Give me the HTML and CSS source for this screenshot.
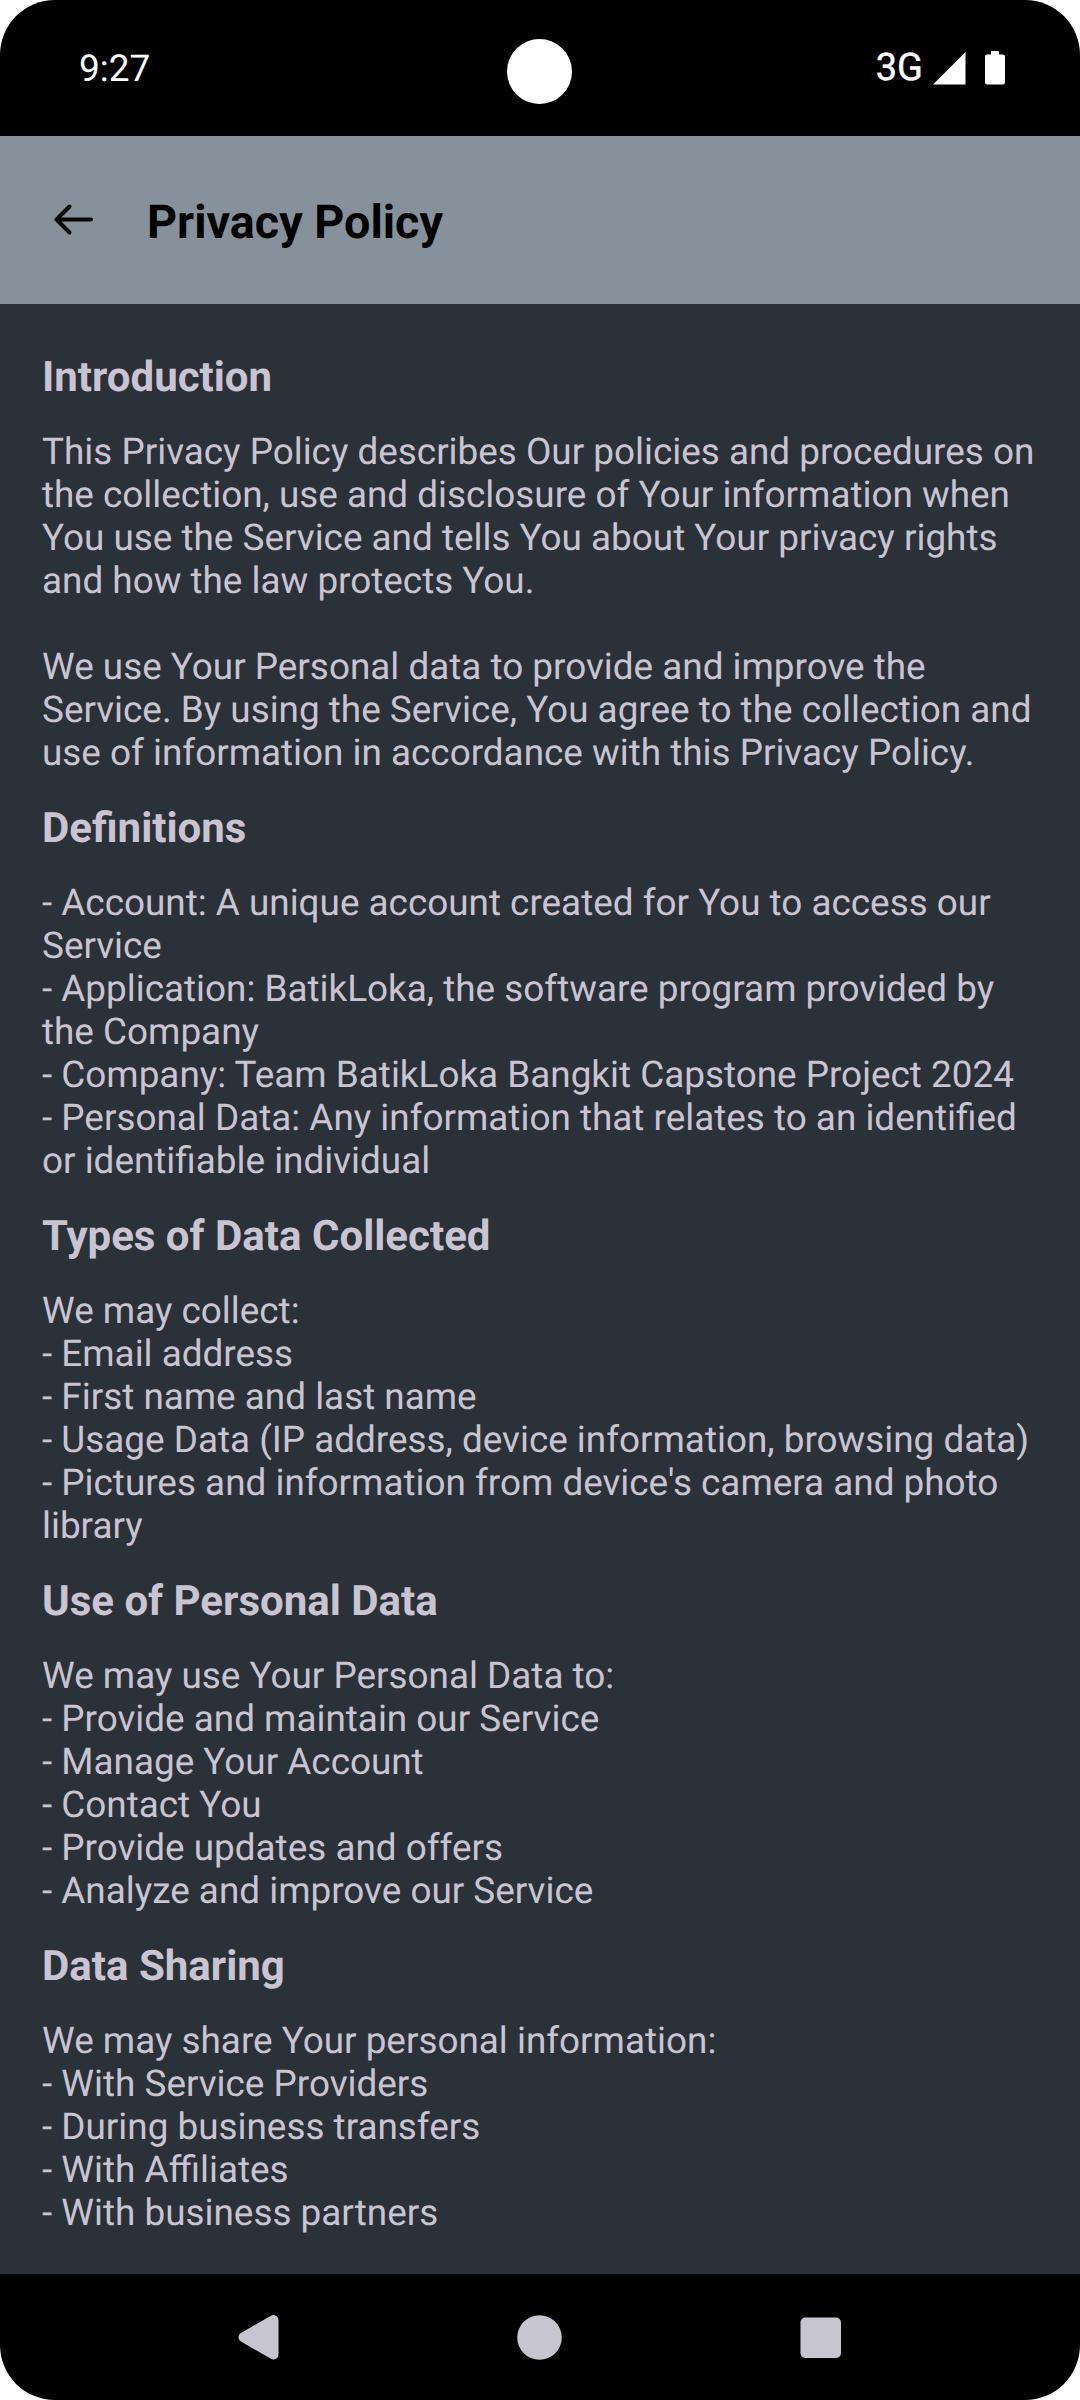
FILE: index.html
```html
<!DOCTYPE html>
<html lang="en">
<head>
<meta charset="utf-8">
<title>Privacy Policy</title>
<link rel="stylesheet" href="styles.css">
</head>
<body>
<div class="screen">
  <div class="status">
    <span class="clock">9:27</span>
    <span class="camera"></span>
    <div class="indicators">
      <span class="network">3G</span>
      <svg class="signal" width="33" height="33" viewBox="0 0 33 33"><path d="M32.500 0V32.500H0Z" fill="#fff"/></svg>
      <svg class="battery" width="20" height="34" viewBox="0 0 20 34"><path d="M6 0h8v3.500h4q2 0 2 2v26q0 2-2 2H2q-2 0-2-2v-26q0-2 2-2h4z" fill="#fff"/></svg>
    </div>
  </div>
  <header class="appbar">
    <svg class="back" width="40" height="32" viewBox="0 0 40 32" fill="none" stroke="#000" stroke-width="4" stroke-linecap="round" stroke-linejoin="round"><path d="M37 15.500H2.500M15.500 2.500L2.500 15.500L15.500 28.500"/></svg>
    <h1>Privacy Policy</h1>
  </header>
  <main class="content">
    <h2>Introduction</h2>
    <p>This Privacy Policy describes Our policies and procedures on
the collection, use and disclosure of Your information when
You use the Service and tells You about Your privacy rights
and how the law protects You.

We use Your Personal data to provide and improve the
Service. By using the Service, You agree to the collection and
use of information in accordance with this Privacy Policy.</p>
    <h2>Definitions</h2>
    <p>- Account: A unique account created for You to access our
Service
- Application: BatikLoka, the software program provided by
the Company
- Company: Team BatikLoka Bangkit Capstone Project 2024
- Personal Data: Any information that relates to an identified
or identifiable individual</p>
    <h2>Types of Data Collected</h2>
    <p>We may collect:
- Email address
- First name and last name
- Usage Data (IP address, device information, browsing data)
- Pictures and information from device's camera and photo
library</p>
    <h2>Use of Personal Data</h2>
    <p>We may use Your Personal Data to:
- Provide and maintain our Service
- Manage Your Account
- Contact You
- Provide updates and offers
- Analyze and improve our Service</p>
    <h2>Data Sharing</h2>
    <p>We may share Your personal information:
- With Service Providers
- During business transfers
- With Affiliates
- With business partners</p>
  </main>
  <nav class="navbar">
    <svg width="42" height="46" viewBox="0 0 42 46"><path d="M35.500 6V40.500L5.500 23.250Z" fill="#c7c5d0" stroke="#c7c5d0" stroke-width="10" stroke-linejoin="round"/></svg>
    <svg width="46" height="46" viewBox="0 0 46 46"><circle cx="22.500" cy="23.500" r="22.300" fill="#c7c5d0"/></svg>
    <svg width="42" height="46" viewBox="0 0 42 46"><rect x=".5" y="3.500" width="40.500" height="40.500" rx="5" fill="#c7c5d0"/></svg>
  </nav>
</div>
</body>
</html>
```
FILE: styles.css
```css
body { margin: 0; background: #fff; font-family: Roboto, sans-serif; text-rendering: geometricPrecision; }
.screen { width: 1080px; height: 2400px; display: flex; flex-direction: column; overflow: hidden; border-radius: 55px; background: #000; }
.status { height: 136px; flex: none; display: grid; grid-template-columns: 1fr 65px 1fr; align-items: center; color: #fff; font-size: 37px; padding: 0 75px 0 79px; box-sizing: border-box; }
.clock { margin-top: 2px; }
.camera { width: 65px; height: 65px; border-radius: 50%; background: #fff; margin: 7px 0 0 -2.5px; }
.indicators { display: flex; justify-content: flex-end; align-items: center; }
.network { font-size: 38px; -webkit-text-stroke: 0.4px #fff; }
.signal { margin-left: 10px; }
.battery { margin-left: 19px; }
.appbar { height: 168px; flex: none; display: flex; align-items: center; background: #87919b; padding-left: 54px; box-sizing: border-box; }
h1 { margin: 6px 0 0 53px; font-size: 46.7px; font-weight: 700; }
.content { flex: 1; min-height: 0; background: #2b3139; color: #cac4d0; padding: 42px 42px 0; box-sizing: border-box; }
h2 { margin: 0; font-size: 42px; line-height: 49px; height: 63px; padding-top: 7px; box-sizing: border-box; }
p { margin: 0; font-size: 36.87px; line-height: 43px; white-space: pre; padding: 22px 0; }
.navbar { height: 126px; flex: none; display: flex; align-items: center; gap: 237px; padding-left: 238px; }
```
